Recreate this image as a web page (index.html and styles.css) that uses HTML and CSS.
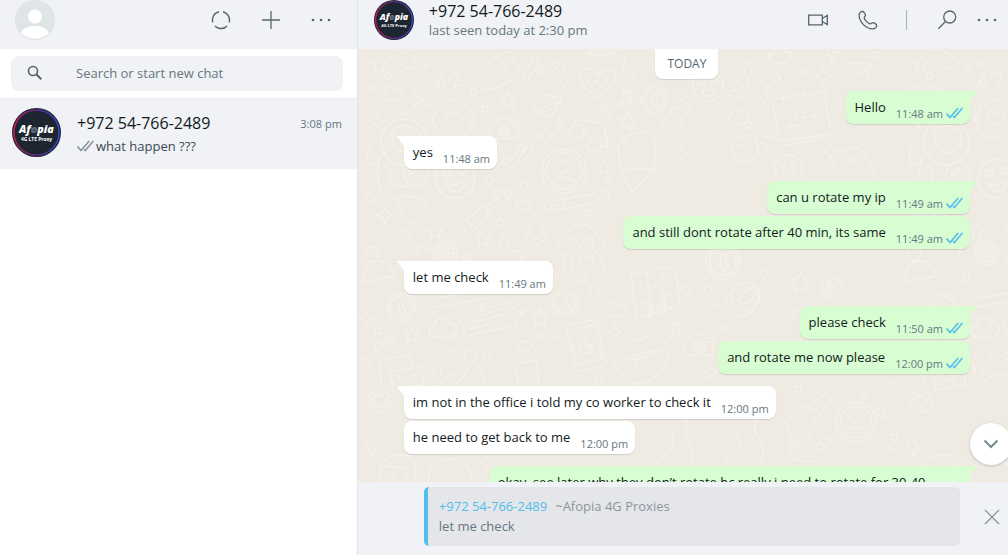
FILE: index.html
```html
<!DOCTYPE html>
<html lang="en">
<head>
  <meta charset="UTF-8">
  <meta name="viewport" content="width=device-width, initial-scale=1.0">
  <title>Chat</title>
  <link rel="stylesheet" href="styles.css">
</head>
<body>

<svg class="defs" aria-hidden="true">
  <symbol id="ticks" viewBox="0 0 16 11">
    <path d="M.5 6 3.800 9.800 11.500 .8M6.600 8.500 7.800 9.800 15.500 .8" fill="none" stroke="currentColor" stroke-width="1.500"/>
  </symbol>
  <symbol id="dots" viewBox="0 0 20 20">
    <g fill="currentColor"><circle cx="2" cy="10" r="1.3"/><circle cx="10" cy="10" r="1.3"/><circle cx="18" cy="10" r="1.3"/></g>
  </symbol>
  <symbol id="afopia" viewBox="0 0 50 50">
    <defs>
      <linearGradient id="ring"><stop offset="0" stop-color="#c2185b"/><stop offset=".5" stop-color="#5a2a86"/><stop offset="1" stop-color="#3345c8"/></linearGradient>
    </defs>
    <circle cx="25" cy="25" r="25" fill="#1c2530"/>
    <circle cx="25" cy="25" r="23" fill="none" stroke="url(#ring)" stroke-width="1.6"/>
    <text x="25" y="25" text-anchor="middle" fill="#fff" font-size="11" font-weight="800" font-style="italic">Af<tspan fill="#65707c">o</tspan>pia</text>
    <text x="25" y="34" text-anchor="middle" fill="#fff" font-size="5" font-weight="700">4G LTE Proxy</text>
  </symbol>

  <!-- doodles used by the wallpaper pattern -->
  <symbol id="d-star" viewBox="-9 -9 18 18" overflow="visible"><path d="M0-8 2.3-3 7.6-2.5 3.7 1.2 4.8 6.6 0 3.8-4.8 6.6-3.7 1.2-7.6-2.5-2.3-3z"/></symbol>
  <symbol id="d-spark" viewBox="-10 -10 20 20" overflow="visible"><path d="M0-9Q1-1 9 0 1 1 0 9-1 1-9 0-1-1 0-9z"/></symbol>
  <symbol id="d-cloud" viewBox="-11 -9 22 18" overflow="visible"><path d="M-7 6C-12 5-11-2-6-2-6-9 3-9 4-4 10-5 12 1 8 5 4 8-2 7-7 6z"/></symbol>
  <symbol id="d-heart" viewBox="-9 -9 18 18" overflow="visible"><path d="M0 7C-6 3-9-1-7-4-5-8-1-6 0-3 1-6 5-8 7-4 9-1 6 3 0 7z"/></symbol>
  <symbol id="d-camera" viewBox="-17 -13 34 26" overflow="visible"><path d="M-13-7H-8L-6-11H4L6-7H13Q15-7 15-5V9Q15 11 13 11H-13Q-15 11-15 9V-5Q-15-7-13-7z"/><circle cy="2" r="6"/><circle cy="2" r="3"/><circle cx="11" cy="-3" r="1"/></symbol>
  <symbol id="d-clock" viewBox="-15 -15 30 30" overflow="visible"><circle r="14"/><circle r="11"/><path d="M-2-6H2V0L5 4 2 7-2 2z"/></symbol>
  <symbol id="d-note" viewBox="-7 -10 14 20" overflow="visible"><path d="M-2 5V-6L6-8V3M-2-3 6-5"/><circle cx="-4" cy="6" r="2.5"/><circle cx="4" cy="4" r="2.5"/></symbol>
  <symbol id="d-smile" viewBox="-17 -17 34 34" overflow="visible"><circle r="15"/><path d="M-6-1C-11-4-9-8-6-6-4-9-1-5-6-1zM6-3C1-6 3-10 6-8 9-10 11-6 6-3zM-6 4Q1 5 7 2 7 9 1 10-4 10-6 4z"/></symbol>
  <symbol id="d-quote" viewBox="-11 -8 22 16" overflow="visible"><path d="M-3-2A3.5 3.5 0 1 0-6 2Q-5 5-8 6-2 5-3-2zM8-3A3.5 3.5 0 1 0 5 1Q6 4 3 5 9 4 8-3z"/></symbol>
  <symbol id="d-bolt" viewBox="-7 -10 14 20" overflow="visible"><path d="M-5-7 2-9 1-3 6-3-2 8-1 1-6 1z"/></symbol>
  <symbol id="d-pin" viewBox="-7 -9 14 18" overflow="visible"><path d="M1 8C-4 3-7-1-5-4-3-9 5-9 6-3 6 1 3 5 1 8z"/><circle cy="-2" r="2"/></symbol>
</svg>

<div class="app">
  <aside class="sidebar">
    <header class="bar">
      <svg class="avatar" viewBox="0 0 40 40" role="img" aria-label="Profile">
        <circle cx="20" cy="20" r="20" fill="#dfe5e7"/>
        <circle cx="20" cy="16.5" r="7" fill="#fff"/>
        <path d="M6 33C9 23.5 31 23.5 34 33A20 20 0 0 1 6 33z" fill="#fff"/>
      </svg>
      <div class="bar-actions">
        <button class="icon-btn" aria-label="Status">
          <svg viewBox="0 0 20 20" fill="none" stroke="currentColor" stroke-width="1.4"><circle cx="10" cy="10" r="8.500" pathLength="360" stroke-dasharray="92 28" transform="rotate(-76 10 10)"/></svg>
        </button>
        <button class="icon-btn" aria-label="New chat">
          <svg viewBox="0 0 20 20" stroke="currentColor" stroke-width="1.3"><path d="M10 1V19M1 10H19"/></svg>
        </button>
        <button class="icon-btn" aria-label="Menu"><svg><use href="#dots"/></svg></button>
      </div>
    </header>

    <div class="search">
      <label class="search-box" for="search">
        <svg class="search-icon" viewBox="0 0 16 16" fill="none" stroke="currentColor"><circle cx="6" cy="6" r="4.500" stroke-width="1.600"/><path d="M9.300 9.300 14.300 14.300" stroke-width="2"/></svg>
        <input type="text" id="search" placeholder="Search or start new chat">
      </label>
    </div>

    <a class="chat" href="#chat">
      <svg class="chat-avatar"><use href="#afopia"/></svg>
      <div class="chat-info">
        <div class="chat-row">
          <span class="chat-name">+972 54-766-2489</span>
          <span class="chat-time">3:08 pm</span>
        </div>
        <div class="chat-last"><svg class="ticks"><use href="#ticks"/></svg>what happen ???</div>
      </div>
    </a>
  </aside>

  <main class="conversation" id="chat">
    <header class="bar">
      <svg class="avatar"><use href="#afopia"/></svg>
      <div class="contact">
        <div class="contact-name">+972 54-766-2489</div>
        <div class="contact-seen">last seen today at 2:30 pm</div>
      </div>
      <div class="call-actions">
        <button class="icon-btn" aria-label="Video call">
          <svg viewBox="0 0 20 20" fill="none" stroke="currentColor" stroke-width="1.300"><path d="M.7 5.200H14.300V14.800H.7zM14.300 8.500 19.300 5.500V14.500L14.300 11.500"/></svg>
        </button>
        <button class="icon-btn" aria-label="Voice call">
          <svg viewBox="0 0 20 20" fill="none" stroke="currentColor" stroke-width="1.300"><path d="M4.700 1.500C3 1.200 1 3 1.100 5.500 1.300 12 8 18.800 14.500 18.800 17 18.800 19 17 18.700 15.300 18.500 14.300 16 12.700 15 12.600 14 12.500 13 14.200 12 13.900 10 13.300 7 10.500 6.200 8 5.900 7 7.500 6.200 7.500 5.200 7.500 4.200 5.700 1.700 4.700 1.500z"/></svg>
        </button>
      </div>
      <div class="more-actions">
        <button class="icon-btn" aria-label="Search">
          <svg viewBox="0 0 20 20" fill="none" stroke="currentColor" stroke-width="1.300"><circle cx="12.700" cy="7" r="6"/><path d="M8.500 11.500 1.300 18.700"/></svg>
        </button>
        <button class="icon-btn" aria-label="Menu"><svg><use href="#dots"/></svg></button>
      </div>
    </header>

    <section class="messages">
      <svg class="wallpaper" aria-hidden="true">
        <defs>
          <pattern id="doodles" width="542" height="500" patternUnits="userSpaceOnUse">
            <g fill="none" stroke="#f5f1ea" stroke-width="1.300" stroke-linejoin="round" stroke-linecap="round">
              <!-- stars, sparks, clouds, hearts -->
              <use href="#d-star" x="12" y="7" width="18" height="18"/>
              <use href="#d-star" x="141" y="42" width="20" height="20"/>
              <use href="#d-star" x="259" y="63" width="20" height="20"/>
              <use href="#d-star" x="238" y="111" width="16" height="16"/>
              <use href="#d-star" x="68" y="174" width="18" height="18"/>
              <use href="#d-star" x="116" y="181" width="18" height="18"/>
              <use href="#d-star" x="228" y="231" width="17" height="17"/>
              <use href="#d-star" x="172" y="259" width="21" height="21"/>
              <use href="#d-star" x="45" y="278" width="17" height="17"/>
              <use href="#d-star" x="71" y="312" width="16" height="16"/>
              <use href="#d-star" x="431" y="222" width="23" height="23"/>
              <use href="#d-star" x="344" y="316" width="16" height="16"/>
              <use href="#d-star" x="514" y="356" width="16" height="16"/>
              <use href="#d-spark" x="107" y="12" width="12" height="12"/>
              <use href="#d-spark" x="203" y="31" width="13" height="13"/>
              <use href="#d-spark" x="47" y="41" width="19" height="19"/>
              <use href="#d-spark" x="10" y="63" width="17" height="17"/>
              <use href="#d-spark" x="178" y="77" width="20" height="20"/>
              <use href="#d-spark" x="17" y="156" width="20" height="20"/>
              <use href="#d-spark" x="0" y="261" width="16" height="16"/>
              <use href="#d-spark" x="249" y="275" width="16" height="16"/>
              <use href="#d-spark" x="335" y="221" width="13" height="13"/>
              <use href="#d-spark" x="455" y="17" width="20" height="20"/>
              <use href="#d-spark" x="470" y="47" width="15" height="15"/>
              <use href="#d-spark" x="464" y="94" width="17" height="17"/>
              <use href="#d-spark" x="315" y="97" width="16" height="16"/>
              <use href="#d-spark" x="122" y="406" width="14" height="14"/>
              <use href="#d-cloud" x="22" y="36" width="22" height="18"/>
              <use href="#d-cloud" x="70" y="267" width="30" height="25"/>
              <use href="#d-cloud" x="243" y="250" width="27" height="20"/>
              <use href="#d-cloud" x="408" y="-3" width="28" height="20"/>
              <use href="#d-cloud" x="368" y="59" width="25" height="18"/>
              <use href="#d-heart" x="157" y="148" width="17" height="17"/>
              <use href="#d-heart" x="159" y="289" width="17" height="17"/>
              <use href="#d-heart" x="355" y="124" width="14" height="14"/>
              <use href="#d-camera" x="130" y="66" width="32" height="26"/>
              <use href="#d-camera" x="325" y="283" width="32" height="26"/>
              <use href="#d-clock" x="282" y="37" width="28" height="28"/>
              <use href="#d-clock" x="193" y="240" width="28" height="28"/>
              <use href="#d-clock" x="28" y="243" width="30" height="30"/>
              <use href="#d-clock" x="347" y="195" width="36" height="36"/>
              <use href="#d-note" x="260" y="39" width="14" height="20"/>
              <use href="#d-note" x="310" y="271" width="13" height="18"/>
              <use href="#d-smile" x="333" y="20" width="34" height="34"/>
              <use href="#d-smile" x="415" y="104" width="32" height="32"/>
              <use href="#d-smile" x="75" y="108" width="44" height="44"/>
              <use href="#d-quote" x="134" y="138" width="22" height="16"/>
              <use href="#d-quote" x="287" y="254" width="22" height="16"/>
              <use href="#d-bolt" x="462" y="232" width="16" height="20"/>
              <use href="#d-bolt" x="7" y="390" width="14" height="20"/>
              <use href="#d-bolt" x="468" y="-4" width="14" height="20"/>
              <use href="#d-pin" x="242" y="53" width="14" height="18"/>
              <use href="#d-pin" x="428" y="392" width="15" height="20"/>
              <!-- 42 -->
              <path d="M84 26 76 38H85M84 26H86V41M91 32Q90 25 97 23 104 24 99 32L96 38 105 36M80 34 83 30"/>
              <!-- rocket -->
              <path d="M124 22Q132 8 152 2 159 14 162 28L150 32Q142 41 125 40L134 31zM135 17 128 21M142 12Q151 14 144 22M165 28 178 4 181 15 168 33z"/>
              <!-- scribble pens -->
              <path d="M35 3Q34-2 40 0L56 9Q62 16 55 20 47 21 42 14M190 24Q195 11 205 9 210 13 204 22 194 33 190 24M195 23 203 12"/>
              <!-- flaming heart -->
              <path d="M240 49C222 37 217 23 226 20 234 17 238 25 240 27 244 21 255 19 257 27 257 36 247 43 240 49zM222 18Q221 9 229 8L231 1 236 9 243-1 245 8 256 2 257 9 266 6Q269 23 257 36M229 29 233 38 239 31 243 38 251 28"/>
              <!-- badge with a heart -->
              <path d="M96 51Q104 49 106 57 116 58 112 65 120 70 113 76 115 84 107 85 102 93 96 87 88 92 84 85 75 84 78 76 71 70 79 64 77 56 86 57 88 50 96 51zM96 77C85 72 86 64 91 63 95 64 96 66 96 66 99 62 104 64 104 68 103 73 96 77 96 77z"/>
              <!-- planet -->
              <circle cx="188" cy="57" r="11"/>
              <path d="M177 59C164 69 167 70 182 65 202 57 208 47 200 47L194 49M176 63 198 54"/>
              <!-- sunglasses -->
              <circle cx="219" cy="82" r="7"/><circle cx="236" cy="96" r="7"/>
              <path d="M225 87Q231 84 232 90M214 76Q219 69 225 71L247 75 250 99 242 97M249 98 246 79"/>
              <!-- pencil hex -->
              <path d="M260 97 270 86 288 82 298 91 296 121 274 143 262 121zM274 108 289 95M263 121 299 119"/>
              <!-- double tick -->
              <path d="M143 114 156 119 167 98 163 96 154 112 147 109zM160 112 165 115 176 96 172 94z"/>
              <!-- person badges -->
              <circle cx="206" cy="122" r="22"/><circle cx="206" cy="122" r="18"/><circle cx="204" cy="118" r="6"/>
              <path d="M193 135Q205 122 219 134"/>
              <circle cx="498" cy="373" r="20"/><circle cx="498" cy="373" r="16"/><circle cx="497" cy="369" r="5"/>
              <path d="M486 385Q498 373 509 384"/>
              <!-- astronaut -->
              <circle cx="46" cy="93" r="23"/><path d="M34 83Q45 71 60 82 66 98 50 104 34 104 34 83M18 92Q6 97 11 117L21 113Q22 104 28 103M21 113Q18 126 22 140 31 153 31 148M24 120Q29 113 32 119V136L51 138M32 148Q42 150 44 164 50 177 60 174M43 147 62 149Q72 152 68 160"/>
              <circle cx="58" cy="125" r="12"/><circle cx="58" cy="121" r="2"/><circle cx="53" cy="126" r="2"/><circle cx="62" cy="128" r="2"/>
              <!-- pencil -->
              <path d="M105 174 127 155 134 154 134 161 115 182Q106 187 105 174zM109 169Q112 178 118 178M125 156 132 163"/>
              <!-- password box -->
              <path d="M188 153 236 145Q242 148 239 154L192 162Q184 161 188 153z"/>
              <circle cx="194" cy="157" r="1"/><circle cx="200" cy="156" r="1"/><circle cx="206" cy="155" r="1"/><circle cx="213" cy="154" r="1"/>
              <!-- microphone -->
              <rect x="172" y="166" width="12" height="24" rx="6"/><path d="M167 181Q169 195 178 195 189 194 190 180M179 195 183 202"/>
              <!-- monkey -->
              <path d="M206 187Q211 178 222 176 238 176 240 190 248 190 246 197L238 204M205 187Q197 191 202 201L206 206M211 197Q207 189 214 187 221 192 221 199M224 199Q224 188 231 187 237 193 235 200"/>
              <path d="M206 206Q204 219 208 225 215 229 215 214 212 200 206 206zM238 203Q245 212 248 220 242 222 236 214 234 205 238 203zM221 208Q229 211 233 207 230 214 222 212z"/>
              <!-- cocktail and lemon -->
              <path d="M61 197 80 203M58 208 61 197"/><circle cx="87" cy="204" r="12"/><circle cx="87" cy="204" r="9"/><path d="M87 195V213M78 204H96M81 198 93 210M93 198 81 210"/>
              <!-- thumb -->
              <path d="M133 207Q143 200 144 187 151 188 151 200L162 203Q167 208 162 213"/>
              <!-- dome -->
              <circle cx="14" cy="205" r="7"/><path d="M5 233Q6 213 20 212 33 213 36 227z"/>
              <!-- chat banners -->
              <path d="M102 268 151 252 155 260 166 264 157 269 158 276 108 287zM110 270 145 259M109 275 149 264M112 280 134 274M68 253 80 249 130 240M71 259 131 249"/>
              <!-- paper clip -->
              <path d="M18 296Q15 301 20 301L35 292Q38 286 33 287L17 296M22 297 34 290"/>
              <!-- phone -->
              <rect x="212" y="273" width="32" height="47" rx="4" transform="rotate(-12 228 296)"/><rect x="215" y="278" width="26" height="35" transform="rotate(-12 228 296)"/>
              <circle cx="229" cy="296" r="8"/><path d="M226 292Q226 299 233 300L234 297 230 296 228 292z"/>
              <!-- envelopes -->
              <path d="M32 323 63 318 66 335 36 341zM33 323 51 333 63 318M24 337 21 312 52 305 54 315"/>
              <!-- lamp and box -->
              <circle cx="112" cy="307" r="6"/><path d="M107 302 98 309M115 315Q127 320 125 335M112 315Q110 325 99 334M81 338Q89 324 101 325M158 315 178 311 181 335M158 315 160 335"/>
              <!-- lips -->
              <path d="M256 308Q266 300 277 290 283 294 291 286 303 292 309 295 302 305 283 309 267 313 256 308zM256 312Q263 333 278 335 303 333 310 306M268 309Q287 303 304 300M277 318 280 308M285 317 283 307"/>
              <!-- map -->
              <path d="M273 224 289 225 303 218 318 221 322 255 303 263 291 266 278 267zM289 225 293 265M303 218 307 262M279 257 322 241M303 252 316 262"/><circle cx="298" cy="241" r="4"/>
              <!-- gears -->
              <circle cx="21" cy="352" r="6"/><path d="M18 341H23L24 345 28 343 32 347 29 351 33 352 32 357 28 357 29 361 25 363 22 360 20 364 15 362 15 358 11 358 10 353 14 351 11 347 15 343 18 345z"/>
              <!-- milk carton -->
              <path d="M22 417 32 407 49 406 58 416 57 450H23zM22 417 48 419 58 416M48 419 49 450M36 425Q32 434 36 436 40 431 36 425zM71 433Q69 418 80 412 104 405 111 421 117 432 115 447M83 411Q81 402 90 401"/>
              <!-- shoe, snakes and vase -->
              <path d="M427 371 468 345 474 351 452 377 434 394 431 383zM447 358 460 363M470 405Q457 418 429 409M384 433Q363 432 365 419 372 404 382 398 383 387 376 382M384 433Q413 418 402 391 392 378 400 369M301 433Q292 422 303 411 319 398 314 379M312 432Q341 421 333 399 325 385 329 370"/>
              <!-- paper plane -->
              <path d="M490 14 513 15 509 30 503 27 494 20M503 27 511 16"/>
              <!-- airplane -->
              <path d="M386 21 391 12 396 15 397 35 419 24 423 29 407 40 412 55 409 57 394 43 380 50 366 44 392 36z"/>
              <!-- calendar -->
              <path d="M414 51 466 42 473 85 421 92zM425 45V54M431 44V52M446 41V50M453 40V48M424 97 469 89M428 65Q428 58 436 60 441 63 436 70L430 78 444 76M452 57 444 69 457 67M456 57V74"/>
              <!-- cup -->
              <path d="M372 94Q383 84 399 87 402 91 388 96 374 98 372 94L377 111Q389 116 400 105L399 90M402 94Q411 94 407 102L400 105"/>
              <!-- lipstick, hand, rose -->
              <path d="M303 78 321 49 333 58 314 88zM311 65 326 72M316 57 330 65"/>
              <circle cx="387" cy="247" r="14"/><path d="M369 244Q364 262 385 267 403 262 401 240M379 252Q389 237 397 239 400 250 386 255zM369 244Q374 247 374 259M475 118Q480 99 499 98 513 111 518 127M434 267Q440 255 452 262L475 281M470 239Q475 220 486 239"/>
              <!-- loose circles -->
              <circle cx="30" cy="27" r="3"/><circle cx="68" cy="17" r="2"/><circle cx="81" cy="15" r="3"/><circle cx="14" cy="39" r="3"/><circle cx="67" cy="54" r="3"/><circle cx="116" cy="43" r="3"/><circle cx="127" cy="60" r="3"/><circle cx="48" cy="64" r="2"/><circle cx="183" cy="22" r="3"/><circle cx="204" cy="70" r="3"/><circle cx="273" cy="30" r="4"/><circle cx="201" cy="80" r="2"/><circle cx="131" cy="131" r="4"/><circle cx="166" cy="137" r="4"/><circle cx="142" cy="174" r="4"/><circle cx="100" cy="167" r="5"/><circle cx="48" cy="186" r="4"/><circle cx="12" cy="149" r="4"/><circle cx="219" cy="167" r="4"/><circle cx="230" cy="164" r="3"/><circle cx="247" cy="146" r="4"/><circle cx="250" cy="130" r="2"/><circle cx="145" cy="296" r="4"/><circle cx="129" cy="308" r="4"/><circle cx="183" cy="288" r="2"/><circle cx="196" cy="286" r="3"/><circle cx="8" cy="314" r="4"/><circle cx="20" cy="282" r="3"/><circle cx="92" cy="304" r="3"/><circle cx="187" cy="303" r="2"/><circle cx="164" cy="264" r="2"/><circle cx="124" cy="257" r="2"/><circle cx="241" cy="333" r="3"/><circle cx="328" cy="242" r="4"/><circle cx="350" cy="242" r="4"/><circle cx="357" cy="253" r="3"/><circle cx="225" cy="230" r="3"/><circle cx="380" cy="212" r="3"/><circle cx="406" cy="225" r="3"/><circle cx="419" cy="240" r="4"/><circle cx="366" cy="280" r="3"/><circle cx="378" cy="29" r="4"/><circle cx="397" cy="23" r="4"/><circle cx="445" cy="22" r="3"/><circle cx="390" cy="76" r="3"/><circle cx="412" cy="86" r="3"/><circle cx="494" cy="110" r="3"/><circle cx="524" cy="69" r="4"/><circle cx="516" cy="6" r="3"/><circle cx="462" cy="398" r="4"/><circle cx="450" cy="388" r="3"/><circle cx="472" cy="390" r="2"/><circle cx="505" cy="347" r="3"/><circle cx="533" cy="336" r="4"/><circle cx="536" cy="388" r="3"/><circle cx="532" cy="399" r="2"/><circle cx="440" cy="340" r="3"/><circle cx="66" cy="229" r="3"/><circle cx="108" cy="208" r="3"/>
            </g>
          </pattern>
        </defs>
        <rect width="100%" height="100%" fill="url(#doodles)"/>
      </svg>

      <div class="day">TODAY</div>

      <div class="msg out first"><span class="text">Hello</span><span class="meta">11:48 am<svg class="ticks"><use href="#ticks"/></svg></span></div>
      <div class="msg in first"><span class="text">yes</span><span class="meta">11:48 am</span></div>
      <div class="msg out first"><span class="text">can u rotate my ip</span><span class="meta">11:49 am<svg class="ticks"><use href="#ticks"/></svg></span></div>
      <div class="msg out"><span class="text">and still dont rotate after 40 min, its same</span><span class="meta">11:49 am<svg class="ticks"><use href="#ticks"/></svg></span></div>
      <div class="msg in first"><span class="text">let me check</span><span class="meta">11:49 am</span></div>
      <div class="msg out first"><span class="text">please check</span><span class="meta">11:50 am<svg class="ticks"><use href="#ticks"/></svg></span></div>
      <div class="msg out"><span class="text">and rotate me now please</span><span class="meta">12:00 pm<svg class="ticks"><use href="#ticks"/></svg></span></div>
      <div class="msg in first"><span class="text">im not in the office i told my co worker to check it</span><span class="meta">12:00 pm</span></div>
      <div class="msg in"><span class="text">he need to get back to me</span><span class="meta">12:00 pm</span></div>
      <div class="msg out first long"><span class="text">okay, see later why they don’t rotate bc really i need to rotate for 30-40</span></div>

      <button class="scroll-down" aria-label="Scroll to bottom">
        <svg viewBox="0 0 16 10" fill="none" stroke="currentColor" stroke-width="2.200"><path d="M1.500 1.500 8 8 14.500 1.500"/></svg>
      </button>
    </section>

    <footer class="reply">
      <div class="quote">
        <div class="quote-author"><span class="quote-phone">+972 54-766-2489</span><span>~Afopia 4G Proxies</span></div>
        <div class="quote-text">let me check</div>
      </div>
      <button class="close" aria-label="Cancel reply">
        <svg viewBox="0 0 16 16" stroke="currentColor" stroke-width="1.300"><path d="M1 1 15 15M15 1 1 15"/></svg>
      </button>
    </footer>
  </main>
</div>

</body>
</html>
```
FILE: styles.css
```css
* { box-sizing: border-box; }

body {
    margin: 0;
    font-family: "Open Sans", "Noto Sans", sans-serif;
    font-size: 13px;
    color: #111b21;
    background: #fff;
}

button {
    padding: 0;
    border: none;
    background: none;
    color: #54656f;
    cursor: pointer;
}

svg { display: block; }

.defs { position: absolute; width: 0; height: 0; }

.app { display: flex; height: 100vh; overflow: hidden; }

/* Sidebar */
.sidebar {
    flex: 0 0 35.5%;
    border-right: 1px solid #e3e6e9;
    background: #fff;
}

.bar {
    display: flex;
    align-items: center;
    height: 49px;
    padding: 0 16px 9px;
    background: #f0f2f5;
}

.sidebar .bar { padding-left: 15px; }

.avatar { width: 40px; height: 40px; flex: none; }

.bar-actions { display: flex; gap: 30px; margin-left: auto; padding-right: 10px; }

.icon-btn svg { width: 20px; height: 20px; }

.search { padding: 7px 14px 7px 11px; border-bottom: 1px solid #e9edef; }

.search-box {
    display: flex;
    align-items: center;
    height: 35px;
    padding: 0 0 2px 16px;
    border-radius: 8px;
    background: #f0f2f5;
    color: #54656f;
}

.search-icon { width: 16px; height: 16px; flex: none; }

.search-box input {
    flex: 1;
    margin-left: 33px;
    padding: 0;
    border: none;
    outline: none;
    background: none;
    font: inherit;
}

.search-box input::placeholder { color: #667781; opacity: 1; }

.chat {
    display: flex;
    gap: 16px;
    height: 70px;
    padding: 9px 15px 0 12px;
    background: #f0f2f5;
    color: inherit;
    text-decoration: none;
}

.chat-avatar { width: 49px; height: 49px; flex: none; }

.chat-info { flex: 1; padding-top: 3px; }

.chat-row { display: flex; justify-content: space-between; align-items: center; }

.chat-name { font-size: 16px; line-height: 24px; }

.chat-time { font-size: 11px; color: #667781; }

.chat-last {
    display: flex;
    align-items: center;
    gap: 2px;
    line-height: 22px;
    color: #3b4a54;
}

.ticks { width: 17px; height: 12px; color: #8696a0; }

/* Conversation */
.conversation { flex: 1; min-width: 0; display: flex; flex-direction: column; }

.conversation .bar { padding-right: 11px; }

.contact { flex: 1; margin-left: 15px; }

.contact-name { font-size: 16px; line-height: 20px; }

.contact-seen { line-height: 19px; color: #667781; }

.call-actions { display: flex; gap: 30px; padding-right: 28px; border-right: 1px solid #a9b2b8; }

.more-actions { display: flex; gap: 20px; margin-left: 30px; }

.messages {
    position: relative;
    flex: 1;
    min-height: 0;
    display: flex;
    flex-direction: column;
    align-items: flex-start;
    padding: 0 38px 0 46px;
    background: #efeae2;
    overflow: hidden;
}

.wallpaper { position: absolute; inset: 0; width: 100%; height: 100%; }

.day {
    position: relative;
    flex: none;
    align-self: center;
    padding: 5px 12px 6px;
    border-radius: 0 0 8px 8px;
    background: #fff;
    box-shadow: 0 1px 1px rgba(11, 20, 26, 0.13);
    font-size: 12px;
    line-height: 19px;
    color: #54656f;
}

.msg {
    position: relative;
    flex: none;
    display: flex;
    align-items: flex-end;
    gap: 10px;
    max-width: 85%;
    margin-top: 2px;
    padding: 7px 7px 7px 9px;
    border-radius: 8px;
    background: #fff;
    box-shadow: 0 1px 1px rgba(11, 20, 26, 0.13);
}

.msg.first { margin-top: 12px; }

.msg.out { align-self: flex-end; background: #d9fdd3; }

.msg.in.first { border-top-left-radius: 0; }

.msg.out.first { border-top-right-radius: 0; }

/* Bubble tail */
.msg.first::before {
    content: "";
    position: absolute;
    top: 0;
    width: 7px;
    height: 10px;
    background: inherit;
}

.msg.in.first::before { right: 100%; clip-path: polygon(0 0, 100% 0, 100% 100%); }

.msg.out.first::before { left: 100%; clip-path: polygon(0 0, 100% 0, 0 100%); }

.text { line-height: 19px; }

.meta {
    display: flex;
    align-items: center;
    gap: 3px;
    height: 12px;
    margin-bottom: -2px;
    font-size: 11px;
    color: #667781;
    white-space: nowrap;
}

.msg .ticks { color: #53bdeb; }

.msg.long { width: 85%; }

.scroll-down {
    position: absolute;
    right: -4px;
    bottom: 17px;
    display: grid;
    place-items: center;
    width: 42px;
    height: 42px;
    border-radius: 50%;
    background: #fff;
    box-shadow: 0 1px 3px rgba(11, 20, 26, 0.2);
    color: #7c8b94;
}

.scroll-down svg { width: 16px; height: 10px; }

/* Reply preview */
.reply {
    display: flex;
    align-items: center;
    padding: 5px 8px 9px 66px;
    background: #f0f2f5;
}

.quote {
    flex: 1;
    height: 59px;
    padding: 9px 11px;
    border-left: 4px solid #53bdeb;
    border-radius: 5px;
    background: #e4e6ea;
    line-height: 20px;
    color: #667781;
}

.quote-author { display: flex; gap: 8px; color: #8c959b; }

.quote-phone { color: #53bdeb; }

.close { margin-left: 24px; color: #8696a0; }

.close svg { width: 16px; height: 16px; }
```
